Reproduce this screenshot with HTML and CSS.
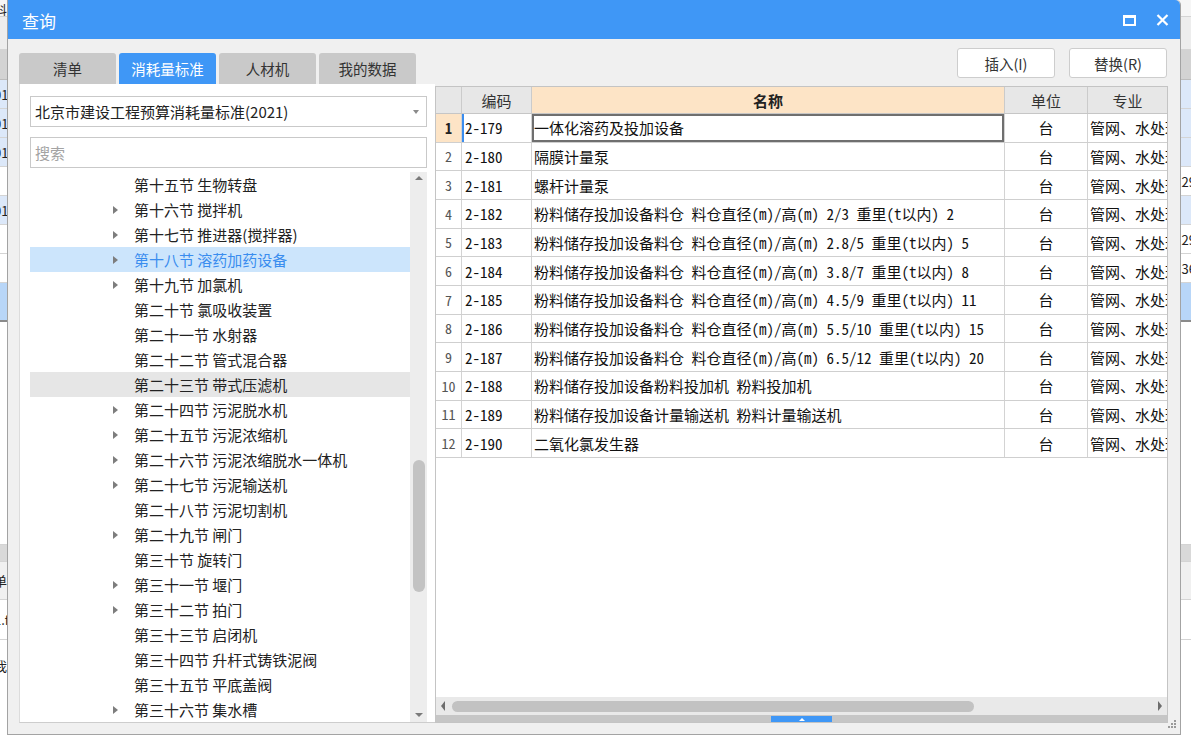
FILE: index.html
```html
<!DOCTYPE html>
<html lang="zh-CN">
<head>
<meta charset="utf-8">
<title>查询</title>
<link rel="stylesheet" href="styles.css">
</head>
<body>
<div class="desk">
  <div class="band b-top"><span class="lt">料</span><span class="rt"></span></div>
  <div class="band b-tool"><span class="lt"></span><span class="rt"></span></div>
  <div class="band b-head"><span class="lt"></span><span class="rt"></span></div>
  <div class="band b-row b-blue"><span class="lt">01</span><span class="rt"></span></div>
  <div class="band b-row b-blue"><span class="lt">01</span><span class="rt"></span></div>
  <div class="band b-row b-blue"><span class="lt">01</span><span class="rt"></span></div>
  <div class="band b-row"><span class="lt"></span><span class="rt">29</span></div>
  <div class="band b-row b-blue"><span class="lt">01</span><span class="rt"></span></div>
  <div class="band b-row"><span class="lt"></span><span class="rt">29</span></div>
  <div class="band b-row"><span class="lt"></span><span class="rt">36</span></div>
  <div class="band b-sel"><span class="lt"></span><span class="rt"></span></div>
  <div class="band b-empty"><span class="lt"></span><span class="rt"></span></div>
  <div class="band b-split"><span class="lt"></span><span class="rt"></span></div>
  <div class="band b-sub"><span class="lt">单</span><span class="rt"></span></div>
  <div class="band b-sub2"><span class="lt">1.f</span><span class="rt"></span></div>
  <div class="band b-sub3"><span class="lt">我</span><span class="rt"></span></div>
</div>

<div class="dialog">
  <div class="titlebar">
    <span class="title">查询</span>
    <span class="tb-btns">
      <svg class="ico-max" width="13" height="11" viewBox="0 0 13 11"><rect x="1" y="1.5" width="11" height="8.5" fill="none" stroke="#fff" stroke-width="2"/><rect x="0" y="0" width="13" height="3" fill="#fff"/></svg>
      <svg class="ico-close" width="13" height="12" viewBox="0 0 13 12"><path d="M1.5 1 L11.5 11 M11.5 1 L1.5 11" stroke="#fff" stroke-width="2.2" fill="none"/></svg>
    </span>
  </div>
  <div class="dbody">
    <div class="leftcol">
      <div class="tabs">
        <div class="tab">清单</div>
        <div class="tab active">消耗量标准</div>
        <div class="tab">人材机</div>
        <div class="tab">我的数据</div>
      </div>
      <div class="lpanel">
        <div class="select"><span>北京市建设工程预算消耗量标准(2021)</span><i class="caret"></i></div>
        <input class="search" type="text" placeholder="搜索">
        <div class="treewrap">
          <ul class="tree">
            <li><i class="arr"></i>第十五节 生物转盘</li>
            <li class="has"><i class="arr"></i>第十六节 搅拌机</li>
            <li class="has"><i class="arr"></i>第十七节 推进器(搅拌器)</li>
            <li class="has sel"><i class="arr"></i>第十八节 溶药加药设备</li>
            <li class="has"><i class="arr"></i>第十九节 加氯机</li>
            <li><i class="arr"></i>第二十节 氯吸收装置</li>
            <li><i class="arr"></i>第二十一节 水射器</li>
            <li><i class="arr"></i>第二十二节 管式混合器</li>
            <li class="hov"><i class="arr"></i>第二十三节 带式压滤机</li>
            <li class="has"><i class="arr"></i>第二十四节 污泥脱水机</li>
            <li class="has"><i class="arr"></i>第二十五节 污泥浓缩机</li>
            <li class="has"><i class="arr"></i>第二十六节 污泥浓缩脱水一体机</li>
            <li class="has"><i class="arr"></i>第二十七节 污泥输送机</li>
            <li><i class="arr"></i>第二十八节 污泥切割机</li>
            <li class="has"><i class="arr"></i>第二十九节 闸门</li>
            <li><i class="arr"></i>第三十节 旋转门</li>
            <li class="has"><i class="arr"></i>第三十一节 堰门</li>
            <li class="has"><i class="arr"></i>第三十二节 拍门</li>
            <li><i class="arr"></i>第三十三节 启闭机</li>
            <li><i class="arr"></i>第三十四节 升杆式铸铁泥阀</li>
            <li><i class="arr"></i>第三十五节 平底盖阀</li>
            <li class="has"><i class="arr"></i>第三十六节 集水槽</li>
          </ul>
          <div class="vscroll"><i class="up"></i><div class="vthumb"></div><i class="down"></i></div>
        </div>
      </div>
    </div>
    <div class="rightcol">
      <div class="btns"><button class="btn">插入(I)</button><button class="btn">替换(R)</button></div>
      <div class="grid">
        <div class="grow ghead">
          <div class="c cn"></div>
          <div class="c cc hc">编码</div>
          <div class="c cm hc hname">名称</div>
          <div class="c cu">单位</div>
          <div class="c cs hc">专业</div>
        </div>
        <div class="grow cur">
          <div class="c cn">1</div><div class="c cc">2-179</div><div class="c cm">一体化溶药及投加设备</div><div class="c cu">台</div><div class="c cs">管网、水处理</div>
        </div>
        <div class="grow">
          <div class="c cn">2</div><div class="c cc">2-180</div><div class="c cm">隔膜计量泵</div><div class="c cu">台</div><div class="c cs">管网、水处理</div>
        </div>
        <div class="grow">
          <div class="c cn">3</div><div class="c cc">2-181</div><div class="c cm">螺杆计量泵</div><div class="c cu">台</div><div class="c cs">管网、水处理</div>
        </div>
        <div class="grow">
          <div class="c cn">4</div><div class="c cc">2-182</div><div class="c cm">粉料储存投加设备料仓 料仓直径(m)/高(m) 2/3 重里(t以内) 2</div><div class="c cu">台</div><div class="c cs">管网、水处理</div>
        </div>
        <div class="grow">
          <div class="c cn">5</div><div class="c cc">2-183</div><div class="c cm">粉料储存投加设备料仓 料仓直径(m)/高(m) 2.8/5 重里(t以内) 5</div><div class="c cu">台</div><div class="c cs">管网、水处理</div>
        </div>
        <div class="grow">
          <div class="c cn">6</div><div class="c cc">2-184</div><div class="c cm">粉料储存投加设备料仓 料仓直径(m)/高(m) 3.8/7 重里(t以内) 8</div><div class="c cu">台</div><div class="c cs">管网、水处理</div>
        </div>
        <div class="grow">
          <div class="c cn">7</div><div class="c cc">2-185</div><div class="c cm">粉料储存投加设备料仓 料仓直径(m)/高(m) 4.5/9 重里(t以内) 11</div><div class="c cu">台</div><div class="c cs">管网、水处理</div>
        </div>
        <div class="grow">
          <div class="c cn">8</div><div class="c cc">2-186</div><div class="c cm">粉料储存投加设备料仓 料仓直径(m)/高(m) 5.5/10 重里(t以内) 15</div><div class="c cu">台</div><div class="c cs">管网、水处理</div>
        </div>
        <div class="grow">
          <div class="c cn">9</div><div class="c cc">2-187</div><div class="c cm">粉料储存投加设备料仓 料仓直径(m)/高(m) 6.5/12 重里(t以内) 20</div><div class="c cu">台</div><div class="c cs">管网、水处理</div>
        </div>
        <div class="grow">
          <div class="c cn">10</div><div class="c cc">2-188</div><div class="c cm">粉料储存投加设备粉料投加机 粉料投加机</div><div class="c cu">台</div><div class="c cs">管网、水处理</div>
        </div>
        <div class="grow">
          <div class="c cn">11</div><div class="c cc">2-189</div><div class="c cm">粉料储存投加设备计量输送机 粉料计量输送机</div><div class="c cu">台</div><div class="c cs">管网、水处理</div>
        </div>
        <div class="grow">
          <div class="c cn">12</div><div class="c cc">2-190</div><div class="c cm">二氧化氯发生器</div><div class="c cu">台</div><div class="c cs">管网、水处理</div>
        </div>
        <div class="gfill"></div>
        <div class="hscroll"><i class="hl"></i><div class="hthumb"></div><i class="hr"></i></div>
        <div class="gstrip"><span class="gtab"><i></i></span></div>
      </div>
    </div>
  </div>
  <svg class="grip" width="9" height="9" viewBox="0 0 9 9"><rect x="6" y="0" width="2" height="2" fill="#9a9a9a"/><rect x="3" y="3" width="2" height="2" fill="#9a9a9a"/><rect x="6" y="3" width="2" height="2" fill="#9a9a9a"/><rect x="0" y="6" width="2" height="2" fill="#9a9a9a"/><rect x="3" y="6" width="2" height="2" fill="#9a9a9a"/><rect x="6" y="6" width="2" height="2" fill="#9a9a9a"/></svg>
</div>
</body>
</html>
```

FILE: styles.css
```css
* { box-sizing: border-box; }
html, body { margin: 0; padding: 0; }
body {
  width: 1191px;
  height: 741px;
  position: relative;
  overflow: hidden;
  background: #fff;
  color: #222;
  font-family: "Noto Sans CJK SC", "Noto Sans", sans-serif;
}

/* background application */
.desk {
  position: absolute;
  inset: 0;
  display: flex;
  flex-direction: column;
  font-size: 13px;
  color: #222;
}
.band {
  display: flex;
  justify-content: space-between;
  align-items: center;
  overflow: hidden;
  border-bottom: 1px solid #d4d4d4;
  flex: none;
}
.band .lt { margin-left: -6px; }
.band .rt { margin-right: -5px; }
.b-top { height: 17px; background: #f6f6f6; align-items: flex-start; }
.b-tool { height: 33px; background: #ededed; }
.b-head { height: 30px; background: #d3d3d3; border-bottom-color: #bdbdbd; }
.b-row { height: 29px; background: #fff; }
.b-blue { background: #dce8f9; }
.b-sel { height: 39px; background: #b8d6f8; border-bottom: 2px solid #8a8a8a; }
.b-empty { height: 223px; background: #fff; }
.b-split { height: 17px; background: #d9d9d9; }
.b-sub { height: 38px; background: #f0f0f0; }
.b-sub2 { height: 40px; background: #fff; }
.b-sub3 { height: 50px; background: #fff; border-bottom: none; }

/* dialog window */
.dialog {
  position: absolute;
  left: 7px;
  top: 0;
  width: 1174px;
  height: 735px;
  background: #f0f0f0;
  border: 1px solid #a3a3a3;
  border-top: none;
  border-radius: 0 5px 0 0;
  display: flex;
  flex-direction: column;
}
.titlebar {
  height: 39px;
  flex: none;
  background: #3f97f6;
  border-radius: 0 5px 0 0;
  display: flex;
  align-items: center;
  justify-content: space-between;
  padding: 0 11px 0 14px;
  color: #fff;
}
.title { font-size: 17px; line-height: 1; margin-top: 1px; }
.tb-btns { display: flex; align-items: center; gap: 20px; }
.ico-max { margin-top: 1px; }
.ico-close { margin-top: 1px; }

.dbody {
  flex: 1;
  display: flex;
  padding: 0 12px 17px 11px;
}

/* left column */
.leftcol {
  width: 416px;
  flex: none;
  display: flex;
  flex-direction: column;
  padding-top: 14px;
}
.tabs { display: flex; gap: 3px; height: 31px; flex: none; }
.tab {
  width: 97px;
  background: #c9c9c9;
  border-radius: 3px 3px 0 0;
  display: flex;
  align-items: center;
  justify-content: center;
  font-size: 14.5px;
  color: #333;
}
.tab.active { background: #3f97f6; color: #fff; }

.lpanel {
  flex: 1;
  background: #fff;
  border-left: 1px solid #dcdcdc;
  border-bottom: 1px solid #cdcdcd;
  padding: 12px 8px 0 10px;
  display: flex;
  flex-direction: column;
  min-height: 0;
}
.select {
  height: 31px;
  flex: none;
  border: 1px solid #c9c9c9;
  background: #fff;
  display: flex;
  align-items: center;
  justify-content: space-between;
  padding: 0 7px 0 4px;
  font-size: 15px;
  color: #222;
}
.caret {
  width: 0;
  height: 0;
  border-top: 4px solid #8a8a8a;
  border-left: 3.5px solid transparent;
  border-right: 3.5px solid transparent;
}
.search {
  display: block;
  width: 100%;
  height: 31px;
  flex: none;
  margin: 10px 0 0;
  border: 1px solid #c9c9c9;
  background: #fff;
  padding: 0 4px;
  font-family: "Noto Sans CJK SC", "Noto Sans", sans-serif;
  font-size: 15px;
  color: #222;
  outline: none;
}
.search::placeholder { color: #a3a3a3; }

.treewrap {
  flex: 1;
  min-height: 0;
  margin-top: 4px;
  display: flex;
  overflow: hidden;
}
.tree {
  flex: 1;
  list-style: none;
  margin: 0;
  padding: 0;
  overflow: hidden;
}
.tree li {
  height: 25px;
  display: flex;
  align-items: center;
  padding-left: 83px;
  font-size: 15px;
  color: #222;
  white-space: nowrap;
}
.tree .arr {
  width: 21px;
  height: 25px;
  flex: none;
  display: flex;
  align-items: center;
}
.tree .has .arr::before {
  content: "";
  width: 0;
  height: 0;
  border-left: 5px solid #7d7d7d;
  border-top: 4px solid transparent;
  border-bottom: 4px solid transparent;
}
.tree li.sel { background: #cce5fc; color: #3a8def; }
.tree li.hov { background: #e6e6e6; }

.vscroll {
  width: 17px;
  flex: none;
  background: #ededed;
  display: flex;
  flex-direction: column;
  align-items: center;
}
.vscroll .up {
  margin-top: 4px;
  width: 0;
  height: 0;
  border-bottom: 4px solid #7a7a7a;
  border-left: 4px solid transparent;
  border-right: 4px solid transparent;
}
.vthumb {
  width: 12px;
  height: 132px;
  margin-top: 280px;
  border-radius: 6px;
  background: #c3c3c3;
}
.vscroll .down {
  margin-top: auto;
  margin-bottom: 5px;
  width: 0;
  height: 0;
  border-top: 4px solid #7a7a7a;
  border-left: 4px solid transparent;
  border-right: 4px solid transparent;
}

/* right column */
.rightcol {
  width: 733px;
  flex: none;
  display: flex;
  flex-direction: column;
  padding-top: 9px;
}
.btns {
  display: flex;
  justify-content: flex-end;
  gap: 14px;
  height: 30px;
  flex: none;
  padding-right: 1px;
}
.btn {
  width: 98px;
  height: 30px;
  background: #fff;
  border: 1px solid #cdcdcd;
  border-radius: 3px;
  font-family: "Noto Sans CJK SC", "Noto Sans", sans-serif;
  font-size: 14.5px;
  color: #333;
  padding: 0;
}

.grid {
  flex: 1;
  min-height: 0;
  margin-top: 8px;
  border: 1px solid #c4c4c4;
  background: #fff;
  display: flex;
  flex-direction: column;
  overflow: hidden;
}
.grow {
  display: flex;
  height: 28.67px;
  flex: none;
  border-bottom: 1px solid #cfcfcf;
  font-family: "Noto Sans Mono CJK SC", "Noto Sans CJK SC", monospace;
  font-size: 15px;
  color: #111;
}
.c {
  flex: none;
  display: flex;
  align-items: center;
  overflow: hidden;
  white-space: nowrap;
  border-right: 1px solid #d3d3d3;
}
.cn { width: 26px; justify-content: center; font-size: 14px; color: #555; }
.cc { width: 70px; padding-left: 3px; }
.cm { width: 473px; padding-left: 2px; }
.cu { width: 83px; justify-content: center; }
.cs { flex: 1; padding-left: 2px; border-right: none; }

.ghead {
  height: 27px;
  background: #e7e7e7;
  border-bottom-color: #c6c6c6;
  font-family: "Noto Sans CJK SC", "Noto Sans", sans-serif;
  color: #333;
}
.ghead .c { border-right-color: #cbcbcb; }
.ghead .hc { justify-content: center; padding-left: 0; }
.ghead .hname { background: #fde4c6; font-weight: bold; color: #222; }

.cur .cn { background: #fde4c6; font-weight: bold; color: #222; }
.cur .cc { box-shadow: inset 2px 0 0 #3a8def; }
.cur .cm { box-shadow: inset 0 0 0 2px #6f6f6f; }

.gfill { flex: 1; }
.hscroll {
  height: 18px;
  flex: none;
  background: #e9e9e9;
  display: flex;
  align-items: center;
  padding: 0 5px;
}
.hl {
  width: 0;
  height: 0;
  border-right: 4px solid #6d6d6d;
  border-top: 5px solid transparent;
  border-bottom: 5px solid transparent;
}
.hthumb {
  width: 522px;
  height: 11px;
  margin-left: 7px;
  border-radius: 6px;
  background: #c2c2c2;
}
.hr {
  margin-left: auto;
  width: 0;
  height: 0;
  border-left: 4px solid #6d6d6d;
  border-top: 5px solid transparent;
  border-bottom: 5px solid transparent;
}
.gstrip {
  height: 7px;
  flex: none;
  background: #c6c6c6;
  display: flex;
  justify-content: center;
}
.gtab {
  width: 61px;
  height: 6px;
  margin-top: 1px;
  background: #3f97f6;
  display: flex;
  justify-content: center;
  align-items: center;
}
.gtab i {
  width: 0;
  height: 0;
  border-bottom: 3px solid #fff;
  border-left: 3px solid transparent;
  border-right: 3px solid transparent;
}

.grip {
  position: absolute;
  right: 3px;
  bottom: 5px;
}
```
